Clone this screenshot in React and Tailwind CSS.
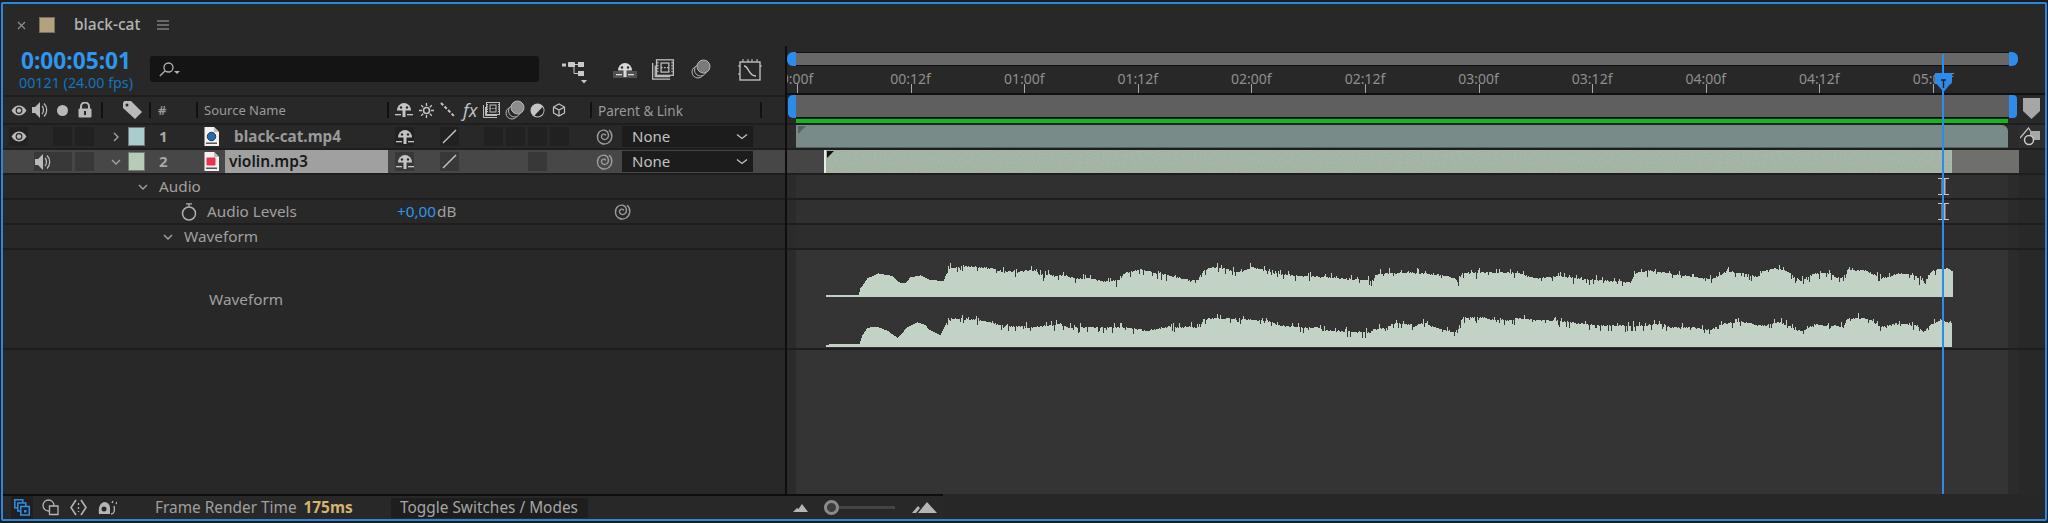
import React from "react";

const FONT = { fontFamily: '"Noto Sans", "Open Sans", sans-serif' };

const TOP = [[826,165],[858,165],[860,145],[867,115],[878,100],[892,108],[900,130],[905,128],[910,112],[920,106],[928,118],[943,124],[946,100],[950,85],[963,78],[973,80],[990,85],[1003,95],[1020,95],[1027,92],[1035,92],[1040,104],[1063,106],[1077,116],[1090,116],[1103,124],[1118,122],[1125,98],[1140,88],[1153,98],[1177,112],[1190,122],[1200,120],[1203,90],[1213,82],[1223,85],[1233,95],[1243,95],[1250,82],[1260,88],[1277,102],[1297,108],[1333,112],[1350,118],[1373,122],[1375,105],[1383,100],[1407,98],[1433,102],[1450,110],[1458,120],[1462,100],[1477,98],[1507,98],[1517,100],[1537,115],[1557,108],[1583,118],[1600,120],[1630,128],[1635,100],[1650,92],[1667,100],[1697,112],[1710,118],[1727,94],[1743,100],[1757,112],[1763,92],[1775,86],[1785,90],[1800,123],[1813,102],[1830,100],[1835,112],[1843,112],[1847,90],[1867,92],[1880,115],[1890,110],[1897,100],[1913,105],[1925,130],[1928,108],[1933,90],[1947,85],[1953,96]];
const BOTTOM = [[826,316],[830,312],[859,312],[862,285],[867,263],[877,260],[887,272],[897,293],[907,262],[917,247],[925,255],[928,268],[940,285],[946,250],[953,235],[972,238],[987,245],[1003,258],[1033,262],[1060,252],[1067,262],[1100,262],[1127,262],[1147,272],[1167,260],[1200,262],[1202,238],[1217,235],[1250,238],[1267,243],[1278,255],[1300,263],[1317,262],[1323,272],[1347,274],[1370,278],[1373,268],[1385,265],[1395,248],[1410,252],[1413,260],[1423,248],[1433,262],[1452,275],[1457,278],[1460,245],[1463,232],[1483,232],[1490,238],[1510,240],[1517,235],[1533,240],[1557,242],[1583,252],[1600,256],[1633,258],[1662,252],[1670,262],[1693,262],[1710,270],[1723,252],[1740,244],[1760,258],[1780,246],[1797,272],[1803,272],[1813,254],[1840,258],[1843,262],[1847,235],[1867,235],[1880,260],[1900,250],[1917,258],[1923,278],[1930,255],[1940,240],[1952,250]];

function wavePath(points, base, seed) {
  let s = seed;
  const rnd = () => {
    s = (s * 1664525 + 1013904223) % 4294967296;
    return s / 4294967296;
  };
  let i = 0;
  const start = points[0][0];
  const end = points[points.length - 1][0];
  let d = `M${start} ${base}`;
  for (let x = start; x < end; x++) {
    while (points[i + 1][0] <= x && i < points.length - 2) i++;
    const [x0, y0] = points[i];
    const [x1, y1] = points[i + 1];
    const py = y0 + ((y1 - y0) * (x - x0)) / (x1 - x0);
    let y = 240 + py / 3;
    if (x > 945) {
      const r = rnd();
      if (r < 0.09) y -= 2 + rnd() * 3;
      else if (r < 0.17) y += 2 + rnd() * 4;
      else y += rnd() * 1.6 - 0.8;
    }
    d += `V${y.toFixed(1)}H${x + 1}`;
  }
  return `${d}V${base}Z`;
}

const G = ({ w, h, children, className = "" }) => (
  <svg width={w} height={h} viewBox={`0 0 ${w} ${h}`} className={`shrink-0 ${className}`}>{children}</svg>
);

const Eye = () => (
  <G w={16} h={11}><path d="M0.5 5.5C3 1.5 5.5 0.5 8 0.5s5 1 7.5 5c-2.5 4-5 5-7.5 5s-5-1-7.5-5Z" fill="#b9b9b9" /><circle cx="8" cy="5.5" r="3.4" fill="#262626" /><circle cx="8" cy="5.5" r="2.2" fill="#b9b9b9" /></G>
);
const Speaker = () => (
  <G w={17} h={16}><path d="M0 5h3l5-5v16l-5-5H0Z" fill="#b9b9b9" /><path d="M10 4c2 2 2 6 0 8M12 1.5c3.6 3.4 3.6 9.6 0 13" fill="none" stroke="#b9b9b9" strokeWidth="1.3" /></G>
);
const Lock = () => (
  <G w={14} h={16}><path d="M3 7V4.5a4 4 0 0 1 8 0V7" fill="none" stroke="#b9b9b9" strokeWidth="2" /><rect x="0.5" y="6.5" width="13" height="9" rx="1" fill="#b9b9b9" /><rect x="6" y="9" width="2" height="4" fill="#282828" /></G>
);
const Tag = () => (
  <G w={19} h={18}><path d="M0 1.5 1.5 0H8l11 11-7 7L0 7Z" fill="#b9b9b9" /><circle cx="4" cy="4" r="1.5" fill="#282828" /></G>
);
const Sep = ({ className = "" }) => <div className={`h-[16px] w-[2px] shrink-0 bg-[#111111] ${className}`} />;
const Shy = ({ c = "#c4c4c4" }) => (
  <G w={18} h={16}><path d="M2 8.500a7 7.500 0 0 1 14 0Z" fill={c} /><circle cx="6" cy="5.500" r="1.200" fill="#282828" /><circle cx="12" cy="5.500" r="1.200" fill="#282828" /><rect x="7.500" y="8" width="3" height="7" fill={c} /><rect x="0" y="12" width="6" height="1.300" fill={c} /><rect x="12" y="12" width="6" height="1.300" fill={c} /></G>
);
const Sun = () => (
  <G w={15} h={15}><circle cx="7.5" cy="7.5" r="3" fill="none" stroke="#c4c4c4" strokeWidth="1.6" /><path d="M7.5 0v3M7.5 12v3M0 7.5h3M12 7.5h3M2.2 2.2l2 2M10.8 10.8l2 2M2.2 12.8l2-2M10.8 4.2l2-2" stroke="#c4c4c4" strokeWidth="1.3" /></G>
);
const Dashes = () => (
  <G w={16} h={16}><path d="M1 1l14 14" stroke="#c4c4c4" strokeWidth="2" strokeDasharray="3.2 1.8" fill="none" /></G>
);
const Film = ({ w = 17, h = 16 }) => (
  <svg width={w} height={h} viewBox="0 0 17 16" className="shrink-0"><rect x="3.5" y="0.5" width="13" height="12" fill="none" stroke="#bdbdbd" /><path d="M0.5 3v12.5H14" fill="none" stroke="#bdbdbd" /><path d="M2.5 5v8.5H14" fill="none" stroke="#bdbdbd" /><rect x="7" y="3" width="6" height="7" fill="none" stroke="#bdbdbd" /><path d="M7 6.5h6M4.5 2v9M15.5 2v9" stroke="#bdbdbd" strokeDasharray="1.3 1" /></svg>
);
const Circles = ({ fill = "#8d8d8d" }) => (
  <G w={20} h={20}><circle cx="7" cy="13" r="6" fill="none" stroke="#b5b5b5" /><circle cx="9.5" cy="11" r="6" fill="#282828" stroke="#b5b5b5" /><circle cx="12.5" cy="7.5" r="6.5" fill={fill} stroke="#b5b5b5" /></G>
);
const Half = () => (
  <G w={15} h={15}><circle cx="7.5" cy="7.5" r="7" fill="#c4c4c4" /><path d="M12.5 4a6 6 0 0 1-8 8.5Z" fill="#222222" /></G>
);
const Cube = () => (
  <G w={14} h={14}><path d="M7 1l5.5 3v6L7 13l-5.5-3V4ZM1.5 4 7 7l5.5-3M7 7v6" fill="none" stroke="#c4c4c4" strokeWidth="1.2" /></G>
);
const Spiral = ({ c = "#9a9a9a" }) => (
  <G w={18} h={18}><path d="M13.500 2.500C16.800 5.500 16.800 12 12 15C7.500 17.500 2 15 1.500 9.500C1 4.500 5.500 1 9.500 2.500C13 4 13.500 9 10.500 11C8 12.500 5 10.500 5.500 8C6 6 8.500 5.500 9.500 7" fill="none" stroke={c} strokeWidth="1.400" strokeLinecap="round" /></G>
);
const Chevron = ({ open, c = "#a5a5a5" }) => (
  <G w={10} h={10}><path d={open ? "M1 3l4 4 4-4" : "M3 1l4 4-4 4"} fill="none" stroke={c} strokeWidth="1.300" /></G>
);
const FileIcon = ({ red }) => (
  <G w={15} h={19}><path d="M0.500 0H10l5 5v14H0.500Z" fill="#f1f1f1" /><path d="M10 0v5h5Z" fill="#bdbdbd" />{red ? <rect x="2.500" y="5.500" width="9" height="8" rx="1" fill="#e8334f" /> : <circle cx="7.500" cy="9.500" r="4.200" fill="#1c6fb5" stroke="#333333" />}<rect x="2" y="15.500" width="11" height="1.500" fill="#555555" /></G>
);
const Stopwatch = () => (
  <G w={16} h={18}><circle cx="8" cy="10.500" r="6.500" fill="none" stroke="#b0b0b0" strokeWidth="1.500" /><path d="M5 0.800h6M8 1v3" stroke="#b0b0b0" strokeWidth="1.300" /></G>
);

const Box = ({ dark, children, className = "" }) => (
  <div className={`flex h-[19px] w-[19px] shrink-0 items-center justify-center ${dark ? "bg-[#383838]" : "bg-[#212121]"} ${className}`}>{children}</div>
);

const LayerRow = ({ selected, num, swatch, icon, name }) => (
  <div className={`flex h-[25px] items-center border-t-2 border-[#1e1e1e] ${selected ? "bg-[#474747]" : "bg-[#282828]"}`}>
    <div className={`ml-[6px] flex w-[44px] shrink-0 ${selected ? "justify-end pr-0" : ""}`}>
      <Box dark={selected}>{selected ? <Speaker /> : <Eye />}</Box>
    </div>
    <Box dark={selected} className="ml-[0px]" />
    <Box dark={selected} className="ml-[3px]" />
    <div className="ml-[17px] flex w-[17px] shrink-0"><Chevron open={selected} /></div>
    <div className={`h-[19px] w-[17px] shrink-0 border border-[#777777] ${swatch}`} />
    <span className="ml-[14px] w-[45px] shrink-0 text-[15px] font-bold text-[#a8a8a8]">{num}</span>
    <FileIcon red={selected} />
    {selected ? (
      <div className="ml-[6px] flex h-[23px] w-[163px] shrink-0 items-center bg-[#a0a0a0] pl-[4px] text-[15.500px] font-semibold text-[#181818]">{name}</div>
    ) : (
      <div className="ml-[15px] w-[154px] shrink-0 whitespace-nowrap text-[15.300px] font-bold text-[#9a9a9a]">{name}</div>
    )}
    <div className="ml-[7px] flex w-[45px] shrink-0"><Box dark={selected}><Shy /></Box></div>
    <Box dark={selected}>
      <G w={15} h={15}><path d="M1 14 14 1" stroke="#c4c4c4" strokeWidth="1.500" /></G>
    </Box>
    <div className="ml-[25px] flex w-[85px] shrink-0 gap-[3px]">
      {selected ? (
        <Box dark className="ml-[44px]" />
      ) : (
        <>
          <Box className="w-[19px]" />
          <Box className="w-[19px]" />
          <Box className="w-[19px]" />
          <Box className="w-[19px]" />
        </>
      )}
    </div>
    <div className="ml-[27px] flex w-[26px] shrink-0"><Spiral /></div>
    <div className="flex h-[21px] w-[131px] shrink-0 items-center justify-between bg-[#1c1c1c] pl-[10px] pr-[5px] text-[15px] text-[#c2c2c2]">
      None
      <G w={12} h={8}><path d="M1 1.500l5 4 5-4" fill="none" stroke="#c2c2c2" strokeWidth="1.300" /></G>
    </div>
  </div>
);

const PropRow = ({ children }) => (
  <div className="flex h-[25px] items-center border-t-2 border-[#1e1e1e] bg-[#282828] text-[15.300px] text-[#a0a0a0]">{children}</div>
);

const IBeam = () => (
  <svg width="11" height="17" viewBox="0 0 11 17" className="absolute left-[1151px] top-[3px]">
    <path d="M0 0.500h11M0 16.500h11" stroke="#c8c8c8" />
    <rect x="3.500" y="1" width="4" height="15" fill="#b4b4b4" />
  </svg>
);

const TimeRow = ({ bg, children }) => (
  <div className="relative flex h-[25px] border-t-2 border-[#1e1e1e]">
    <div className="w-[9px] shrink-0 bg-[#2b2b2b]" />
    <div className={`w-[1212px] shrink-0 ${bg}`} />
    <div className="w-[11px] shrink-0 bg-[#2b2b2b]" />
    <div className="flex-1 bg-[#282828]" />
    {children}
  </div>
);

const TICKS = ["0:00f", "00:12f", "01:00f", "01:12f", "02:00f", "02:12f", "03:00f", "03:12f", "04:00f", "04:12f", "05:00f"];

export default function App() {
  return (
    <div className="h-[523px] w-[2048px] bg-[#1c1c1c] px-[1px] py-[2px]" style={FONT}>
      <div className="flex h-full flex-col overflow-hidden rounded-[2px] border-2 border-[#2b86dc] bg-[#282828]">
        {/* tab */}
        <div className="flex h-[42px] shrink-0 items-center">
          <G w={9} h={9} className="ml-[14px]"><path d="M1 1l7 7M8 1 1 8" stroke="#8e8e8e" strokeWidth="1.200" /></G>
          <div className="ml-[13px] h-[16px] w-[16px] border border-[#7d705a] bg-[#b3a27f]" />
          <span className="ml-[19px] text-[15.500px] font-medium text-[#b4b4b4]">black-cat</span>
          <G w={12} h={10} className="ml-[17px]"><path d="M0 1h12M0 5h12M0 9h12" stroke="#a8a8a8" strokeWidth="1.100" /></G>
        </div>
        <div className="flex min-h-0 flex-1">
          {/* left panel */}
          <div className="flex w-[782px] shrink-0 flex-col">
            <div className="flex h-[49px] shrink-0 items-start">
              <div className="ml-[14px] flex w-[118px] shrink-0 flex-col items-center">
                <span className="mt-[2px] whitespace-nowrap text-[22.700px] font-bold leading-[26px] text-[#2e96ee]">0:00:05:01</span>
                <span className="whitespace-nowrap text-[14.300px] leading-[18px] text-[#1673bd]">00121 (24.00 fps)</span>
              </div>
              <div className="ml-[15px] mt-[10px] flex h-[26px] w-[389px] shrink-0 items-center rounded-[3px] bg-[#141414] pl-[9px]">
                <G w={25} h={15}><circle cx="9.500" cy="5.500" r="4.500" fill="none" stroke="#b0b0b0" strokeWidth="1.300" /><path d="M6 9 .8 14" stroke="#b0b0b0" strokeWidth="1.300" /><path d="M15 9h6l-3 3Z" fill="#b0b0b0" /></G>
              </div>
              <div className="ml-[23px] mt-[10px] flex shrink-0 items-start">
                <G w={26} h={27} className="mt-[4px]"><rect x="0" y="3.500" width="4" height="3" fill="#c8c8c8" /><rect x="6" y="2" width="7" height="5" rx="1" fill="#c8c8c8" /><rect x="16" y="2" width="6" height="5" fill="#c8c8c8" /><rect x="16" y="11" width="6" height="5" fill="#c8c8c8" /><path d="M12 4.500h5M12 5v8.500h5" fill="none" stroke="#c8c8c8" /><path d="M19 20h6l-3 3.500Z" fill="#c8c8c8" /></G>
                <div className="ml-[25px] mt-[2px] flex h-[20px] w-[24px] flex-col items-center justify-end bg-[linear-gradient(to_bottom,#282828_0,#282828_65%,#505050_65%)]">
                  <Shy c="#d8d8d8" />
                </div>
                <div className="ml-[15px] mt-[3px]"><Film w={22} h={21} /></div>
                <div className="ml-[17px] mt-[3px]"><Circles fill="#7a7a7a" /></div>
                <G w={24} h={24} className="ml-[27px] mt-[2px]"><rect x="2" y="4" width="20" height="18" fill="none" stroke="#c8c8c8" strokeWidth="1.300" /><path d="M5 1v3M10 1v3M14 1v3M19 1v3M0 8h2M0 16h2M22 8h2" stroke="#c8c8c8" /><path d="M6 8c5 0 4 10 12 10" fill="none" stroke="#c8c8c8" strokeWidth="1.300" /></G>
              </div>
            </div>
            {/* header */}
            <div className="flex h-[28px] shrink-0 items-center border-t-2 border-[#1e1e1e] text-[13px] text-[#9a9a9a]">
              <div className="ml-[8px]"><Eye /></div>
              <div className="ml-[5px]"><Speaker /></div>
              <div className="ml-[8px] h-[11px] w-[11px] rounded-full bg-[#b9b9b9]" />
              <div className="ml-[10px]"><Lock /></div>
              <Sep className="ml-[9px]" />
              <div className="ml-[20px]"><Tag /></div>
              <Sep className="ml-[7px]" />
              <span className="ml-[7px] mt-[2px] w-[38px] shrink-0 font-semibold">#</span>
              <Sep />
              <span className="ml-[6px] mt-[2px] w-[183px] shrink-0">Source Name</span>
              <Sep />
              <div className="ml-[6px] flex items-center">
                <Shy />
                <div className="ml-[6px]"><Sun /></div>
                <div className="ml-[6px]"><Dashes /></div>
                <span className="ml-[7px] w-[17px] text-[18px] italic leading-none text-[#bdbdbd]">fx</span>
                <div className="ml-[3px]"><Film /></div>
                <div className="ml-[5px]"><Circles /></div>
                <div className="ml-[5px]"><Half /></div>
                <div className="ml-[7px]"><Cube /></div>
              </div>
              <Sep className="ml-[24px]" />
              <span className="ml-[6px] mt-[2px] w-[162px] shrink-0 whitespace-nowrap text-[13.500px]">Parent &amp; Link</span>
              <Sep />
            </div>
            <LayerRow num="1" swatch="bg-[#a9cccc]" name="black-cat.mp4" />
            <LayerRow selected num="2" swatch="bg-[#b6ccb7]" name="violin.mp3" />
            <PropRow>
              <div className="ml-[135px]"><Chevron open /></div>
              <span className="ml-[11px]">Audio</span>
            </PropRow>
            <PropRow>
              <div className="ml-[178px]"><Stopwatch /></div>
              <span className="ml-[10px] w-[190px] shrink-0">Audio Levels</span>
              <span className="text-[#2e96ee]">+0,00</span>
              <span className="ml-[1px] w-[177px] shrink-0">dB</span>
              <Spiral />
            </PropRow>
            <PropRow>
              <div className="ml-[160px]"><Chevron open /></div>
              <span className="ml-[11px]">Waveform</span>
            </PropRow>
            <div className="flex h-[102px] shrink-0 items-center border-y-2 border-[#1e1e1e] text-[15.300px] text-[#a0a0a0]">
              <span className="ml-[206px]">Waveform</span>
            </div>
            <div className="flex-1" />
          </div>
          <div className="w-[2px] shrink-0 bg-[#0e0e0e]" />
          {/* timeline */}
          <div className="relative flex min-w-0 flex-1 flex-col">
            <div className="flex h-[49px] shrink-0 flex-col">
              <div className="mt-[6px] flex h-[14px] shrink-0">
                <div className="w-[9px] rounded-l-[6px] bg-[#2d8ceb]" />
                <div className="w-[1213px] border-y border-[#111111] bg-[#686868]" />
                <div className="w-[9px] rounded-r-[6px] bg-[#2d8ceb]" />
              </div>
              <div className="flex-1" />
            </div>
            <div className="-mt-[29px] flex h-[29px] shrink-0 overflow-hidden border-b-2 border-[#111111] pl-[10px]">
              {TICKS.map((t) => (
                <div key={t} className="relative h-full w-[113.600px] shrink-0">
                  <span className="absolute left-0 top-[2px] -translate-x-1/2 whitespace-nowrap text-[14px] text-[#8f8f8f]">{t}</span>
                  <div className="absolute bottom-0 left-0 h-[9px] w-[1px] bg-[#a8a8a8]" />
                </div>
              ))}
            </div>
            <div className="flex h-[23px] shrink-0">
              <div className="ml-[1px] w-[8px] rounded-l-[5px] bg-[#2d8ceb]" />
              <div className="w-[1213px] border-b border-[#111111] bg-[#5f5f5f]" />
              <div className="w-[8px] rounded-r-[4px] bg-[#2d8ceb]" />
              <div className="ml-[6px] pt-[3px]">
                <G w={17} h={21}><path d="M0 0h17v13l-8.500 8L0 13Z" fill="#a6a6a6" /></G>
              </div>
            </div>
            <div className="ml-[9px] mt-[1px] h-[4px] w-[1212px] shrink-0 bg-[#12b61f]" />
            {/* row 1 */}
            <div className="flex h-[25px] shrink-0 border-t-2 border-[#1e1e1e]">
              <div className="w-[9px] shrink-0 bg-[#2b2b2b]" />
              <div className="relative h-[23px] w-[1212px] shrink-0 overflow-hidden rounded-tr-[6px] border-b border-[#55625f] bg-[#788b89]">
                <div className="absolute left-[2px] top-[1px] h-0 w-0 border-l-[8px] border-t-[8px] border-r-0 border-b-0 border-l-transparent border-t-[#57625f] [transform:scaleX(-1)]" />
              </div>
              <div className="w-[11px] shrink-0 bg-[#2b2b2b]" />
              <div className="flex flex-1 items-center bg-[#2e2e2e] pl-[1px]">
                <G w={21} h={20}><path d="M0 11 8.500 1l4 6" fill="none" stroke="#c0c0c0" strokeWidth="1.300" /><rect x="10" y="4" width="10" height="9" fill="#a8a8a8" /><circle cx="9" cy="13" r="4.500" fill="#2e2e2e" stroke="#c8c8c8" strokeWidth="1.500" /></G>
              </div>
            </div>
            {/* row 2 */}
            <div className="flex h-[25px] shrink-0 border-t-2 border-[#1e1e1e]">
              <div className="w-[37px] shrink-0 bg-[#454545]" />
              <div className="relative h-[23px] w-[1126px] shrink-0 overflow-hidden border-l-2 border-[#e6ebe3] bg-[#a2b4a2]">
                <svg className="absolute inset-0 h-full w-full opacity-25">
                  <filter id="n"><feTurbulence type="fractalNoise" baseFrequency="0.8" numOctaves="2" /><feColorMatrix type="saturate" values="0" /></filter>
                  <rect width="100%" height="100%" filter="url(#n)" />
                </svg>
                <div className="absolute left-[1px] top-[1px] h-0 w-0 border-r-[7px] border-t-[7px] border-r-transparent border-t-[#111111]" />
              </div>
              <div className="w-[69px] shrink-0 border-l-2 border-[#a9bba9] bg-[#6f6f6b]" />
              <div className="flex-1 bg-[#282828]" />
            </div>
            <TimeRow bg="bg-[#303030]"><IBeam /></TimeRow>
            <TimeRow bg="bg-[#303030]"><IBeam /></TimeRow>
            <TimeRow bg="bg-[#2d2d2d]" />
            {/* waveform */}
            <div className="flex h-[102px] shrink-0 border-y-2 border-[#1e1e1e]">
              <div className="w-[9px] shrink-0 bg-[#2b2b2b]" />
              <div className="w-[1212px] shrink-0 bg-[#343434]">
                <svg width="1212" height="98" viewBox="796 250 1212 98" className="block" shapeRendering="crispEdges">
                  <path d={wavePath(TOP, 297, 7)} fill="#c2d2c4" />
                  <path d={wavePath(BOTTOM, 347, 91)} fill="#c2d2c4" />
                </svg>
              </div>
              <div className="w-[11px] shrink-0 bg-[#2b2b2b]" />
              <div className="flex-1 bg-[#282828]" />
            </div>
            <div className="flex min-h-0 flex-1">
              <div className="w-[9px] shrink-0 bg-[#2b2b2b]" />
              <div className="w-[1212px] shrink-0 bg-[#343434]" />
              <div className="w-[11px] shrink-0 bg-[#2b2b2b]" />
              <div className="flex-1" />
            </div>
            {/* playhead */}
            <div className="absolute bottom-0 left-[1155px] top-[8px] w-[2px] bg-[#2d8ceb]" />
            <svg width="17" height="20" viewBox="0 0 17 20" className="absolute left-[1148px] top-[27px]">
              <path d="M0 0h17v9l-8.500 10L0 9Z" fill="#2d8ceb" />
              <path d="M6 7h5M8.500 7v8" stroke="#222222" strokeWidth="1.400" />
            </svg>
          </div>
        </div>
        {/* footer */}
        <div className="flex h-[25px] shrink-0 items-stretch">
          <div className="flex w-[940px] shrink-0 items-center border-t-2 border-[#0e0e0e] text-[15.400px] text-[#9f9f9f]">
            <div className="ml-[8px] flex h-[23px] w-[22px] items-center justify-center bg-[#202020]">
              <G w={16} h={17}><rect x="0.800" y="0.800" width="8" height="8" fill="none" stroke="#2f8fec" strokeWidth="1.500" /><rect x="3.800" y="4" width="8" height="8" fill="#202020" stroke="#2f8fec" strokeWidth="1.500" /><rect x="6.800" y="7.500" width="8.500" height="8.500" fill="#202020" stroke="#2f8fec" strokeWidth="1.500" /><rect x="10" y="11" width="2.500" height="2.500" fill="#2f8fec" /></G>
            </div>
            <div className="ml-[9px]">
              <G w={17} h={17}><circle cx="6.500" cy="6.500" r="5.500" fill="none" stroke="#b5b5b5" strokeWidth="1.300" /><path d="M7.500 7h8.500v8.500H7.500Z" fill="#282828" stroke="#b5b5b5" strokeWidth="1.300" /></G>
            </div>
            <div className="ml-[11px]">
              <G w={17} h={17}><path d="M6 1 1 8.500 6 16M11 1l5 7.500L11 16" fill="none" stroke="#b5b5b5" strokeWidth="1.600" /><path d="M8.500 4v9" stroke="#b5b5b5" strokeWidth="1.300" strokeDasharray="2 2" /></G>
            </div>
            <div className="ml-[11px]">
              <G w={19} h={15}><path d="M1 14c-1-6 1-11 5-12 4 0 6 3 6 6v6Z" fill="#b5b5b5" /><circle cx="6" cy="9" r="2.500" fill="#282828" /><path d="M13 14c3 0 4-3 3-8M14 3l1-2M18 4l1-2" fill="none" stroke="#b5b5b5" strokeWidth="1.300" /></G>
            </div>
            <span className="ml-[38px] w-[148.500px] shrink-0 whitespace-nowrap">Frame Render Time</span>
            <span className="w-[50px] shrink-0 font-bold text-[#d5b470]">175ms</span>
            <div className="ml-[37px] flex h-[20px] w-[197px] shrink-0 items-center justify-center whitespace-nowrap rounded-[2px] bg-[#1e1e1e] text-[#a5a5a5]">Toggle Switches / Modes</div>
            <div className="ml-[205px]">
              <G w={15} h={8}><path d="M0 8 4 4l1.500 1L9 0l6 8Z" fill="#b5b5b5" /></G>
            </div>
            <div className="ml-[16px] h-[15px] w-[15px] rounded-full border-[3px] border-[#8a8a8a] bg-[#3c3c3c]" />
            <div className="h-[3px] w-[56px] bg-[#444444]" />
            <div className="ml-[17px]">
              <G w={25} h={11}><path d="M0 11 6 4l2 2-4 5ZM6 11 15 0l10 11Z" fill="#b5b5b5" /></G>
            </div>
          </div>
          <div className="flex-1 bg-[#272727]" />
        </div>
      </div>
    </div>
  );
}
